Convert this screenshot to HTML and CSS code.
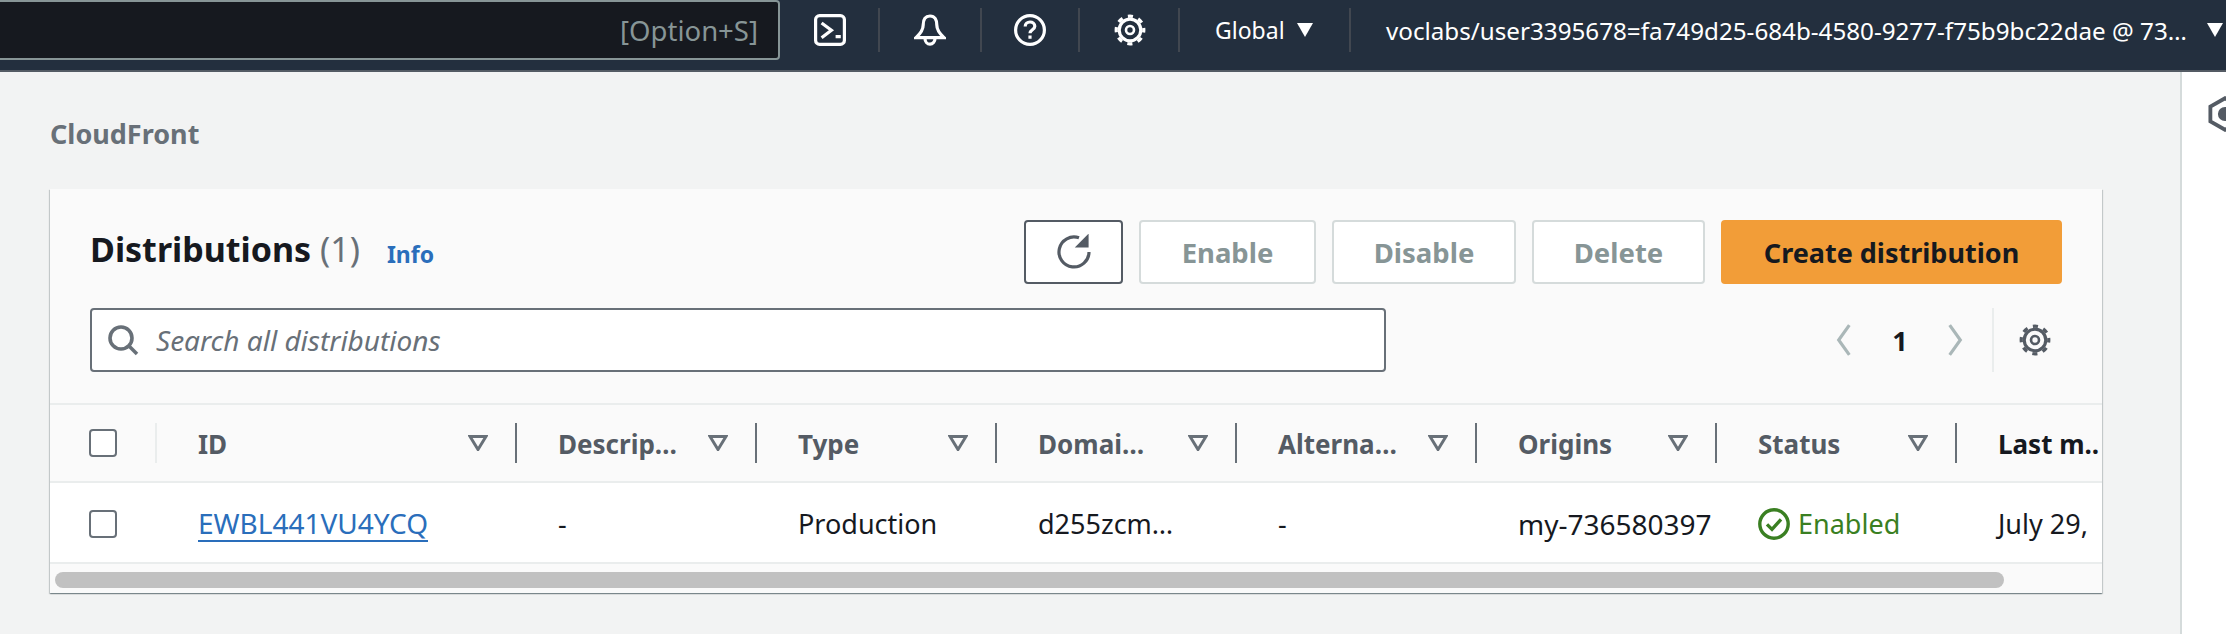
FILE: index.html
```html
<!DOCTYPE html>
<html lang="en">
<head>
  <meta charset="UTF-8">
  <title>CloudFront Distributions</title>
  <link rel="stylesheet" href="styles.css">
</head>
<body>
  <header class="topbar">
    <div class="search-global"><span class="shortcut">[Option+S]</span></div>
    <div class="top-item item-shell">
      <svg class="top-icon" viewBox="0 0 16 16"><rect x="0.8" y="0.8" width="14.4" height="14.4" rx="2"/><path d="M3.800 4.500l4.900 3.600-4.900 3.800M10.800 11.300h2.600"/></svg>
    </div>
    <div class="top-item item-bell">
      <svg class="top-icon" viewBox="0 0 16 16"><path d="M8 1C5.500 1 4.600 3 4.600 5.500 4.600 8 3 10 1 11.800h14C13 10 11.400 8 11.400 5.500 11.400 3 10.500 1 8 1zM5.500 12.200a2.500 2.900 0 0 0 5 0"/></svg>
    </div>
    <div class="top-item item-help">
      <svg class="top-icon" viewBox="0 0 16 16"><circle cx="8" cy="8" r="7.200"/><path d="M5.600 6.200C5.600 4.800 6.700 4 8 4s2.400.8 2.400 2.100c0 1.800-2.400 1.700-2.400 3.500M8 10.700v1.700"/></svg>
    </div>
    <div class="top-item item-gear">
      <svg class="top-icon" viewBox="0 0 16 16"><circle class="gear-teeth" cx="8" cy="8" r="6.900"/><circle cx="8" cy="8" r="5.400"/><circle class="gear-hub" cx="8" cy="8" r="2"/></svg>
    </div>
    <div class="top-item item-region">Global<span class="caret"></span></div>
    <div class="account">voclabs/user3395678=fa749d25-684b-4580-9277-f75b9bc22dae @ 73…<span class="caret"></span></div>
  </header>

  <div class="page">
    <main class="content">
      <div class="breadcrumb">CloudFront</div>

      <section class="panel">
        <div class="panel-head">
          <div class="title-row">
            <h1>Distributions <span class="count">(1)</span></h1>
            <a class="info">Info</a>
            <div class="actions">
              <button class="btn btn-refresh">
                <svg viewBox="0 0 18 18"><path d="M16.500 9a7.500 7.500 0 1 1-5-7.100"/><path class="refresh-arrow" d="M15.800 1v5.200h-5.200z"/></svg>
              </button>
              <button class="btn btn-off btn-enable">Enable</button>
              <button class="btn btn-off btn-disable">Disable</button>
              <button class="btn btn-off btn-delete">Delete</button>
              <button class="btn btn-primary">Create distribution</button>
            </div>
          </div>
          <div class="filter-row">
            <div class="search">
              <svg viewBox="0 0 16 16"><circle cx="7" cy="7" r="5.500"/><path d="M11 11l4 4"/></svg>
              <span>Search all distributions</span>
            </div>
            <div class="pager">
              <svg class="chev" viewBox="0 0 16 32"><path d="M13 2L3 16l10 14"/></svg>
              <span class="page-num">1</span>
              <svg class="chev" viewBox="0 0 16 32"><path d="M3 2l10 14L3 30"/></svg>
            </div>
            <div class="pref">
              <svg viewBox="0 0 16 16"><circle class="gear-teeth" cx="8" cy="8" r="6.900"/><circle cx="8" cy="8" r="5.400"/><circle class="gear-hub" cx="8" cy="8" r="2"/></svg>
            </div>
          </div>
        </div>

        <div class="table">
          <div class="row row-head">
            <div class="cell cell-check first"><span class="box"></span></div>
            <div class="cell"><span class="label">ID</span><svg class="sort" viewBox="0 0 20 16"><path d="M2 1.500h16l-8 13z"/></svg></div>
            <div class="cell"><span class="label">Descrip…</span><svg class="sort" viewBox="0 0 20 16"><path d="M2 1.500h16l-8 13z"/></svg></div>
            <div class="cell"><span class="label">Type</span><svg class="sort" viewBox="0 0 20 16"><path d="M2 1.500h16l-8 13z"/></svg></div>
            <div class="cell"><span class="label">Domai…</span><svg class="sort" viewBox="0 0 20 16"><path d="M2 1.500h16l-8 13z"/></svg></div>
            <div class="cell"><span class="label">Alterna…</span><svg class="sort" viewBox="0 0 20 16"><path d="M2 1.500h16l-8 13z"/></svg></div>
            <div class="cell"><span class="label">Origins</span><svg class="sort" viewBox="0 0 20 16"><path d="M2 1.500h16l-8 13z"/></svg></div>
            <div class="cell"><span class="label">Status</span><svg class="sort" viewBox="0 0 20 16"><path d="M2 1.500h16l-8 13z"/></svg></div>
            <div class="cell last"><span class="label">Last m..</span></div>
          </div>
          <div class="row row-body">
            <div class="cell cell-check"><span class="box"></span></div>
            <div class="cell"><a class="id-link">EWBL441VU4YCQ</a></div>
            <div class="cell">-</div>
            <div class="cell">Production</div>
            <div class="cell">d255zcm…</div>
            <div class="cell">-</div>
            <div class="cell cell-origin">my-736580397</div>
            <div class="cell status">
              <svg viewBox="0 0 16 16"><circle cx="8" cy="8" r="7.100"/><path d="M4.500 8.200l2.500 2.500 4.500-5"/></svg>
              Enabled
            </div>
            <div class="cell">July 29,</div>
          </div>
        </div>
        <div class="scroll-track"><div class="scroll-thumb"></div></div>
      </section>
    </main>

    <aside class="tools">
      <svg viewBox="0 0 16 16"><path d="M8 1l6.500 3.700v6.600L8 15l-6.500-3.700V4.700z"/><circle class="tools-dot" cx="8" cy="8" r="2.300"/></svg>
    </aside>
  </div>
</body>
</html>
```

FILE: styles.css
```css
* {
  box-sizing: border-box;
}
html, body {
  height: 100%;
}
body {
  margin: 0;
  background: #f2f3f3;
  color: #16191f;
  font-family: 'Noto Sans', 'Open Sans', sans-serif;
  font-size: 27px;
  overflow: hidden;
}
svg {
  fill: none;
  stroke: currentColor;
  stroke-width: 1.6;
  display: block;
}

/* top bar */
.topbar {
  height: 72px;
  background: #232f3e;
  border-bottom: 2px solid #545b64;
  display: flex;
  align-items: flex-start;
  color: #fff;
}
.search-global {
  width: 780px;
  height: 60px;
  background: #16191f;
  border: 2px solid #879596;
  border-left: none;
  border-radius: 0 4px 4px 0;
  display: flex;
  align-items: center;
  justify-content: flex-end;
  padding-right: 20px;
  flex-shrink: 0;
}
.shortcut {
  color: #879596;
  font-size: 27.5px;
}
.top-item {
  height: 44px;
  margin-top: 8px;
  border-right: 2px solid #414750;
  display: flex;
  align-items: center;
  justify-content: center;
}
.item-shell { width: 100px; padding-left: 2px; }
.item-bell { width: 102px; }
.item-help { width: 98px; }
.item-gear { width: 100px; padding-left: 2px; }
.item-region {
  width: 171px;
  font-size: 23px;
  justify-content: flex-start;
  padding-left: 35px;
}
.top-icon {
  width: 32px;
  height: 32px;
  stroke-width: 1.6;
}
.gear-teeth {
  stroke-width: 1.6;
  stroke-dasharray: 2.6 2.82;
  stroke-dashoffset: 1.3;
}
.gear-hub {
  stroke-width: 1.3;
}
.caret {
  width: 0;
  height: 0;
  border-left: 8px solid transparent;
  border-right: 8px solid transparent;
  border-top: 14px solid #fff;
  margin-left: 12px;
}
.account {
  margin-left: 35px;
  height: 44px;
  margin-top: 8px;
  display: flex;
  align-items: center;
  white-space: nowrap;
  font-size: 24.2px;
}
.account .caret {
  margin-left: 20px;
}

/* page */
.page {
  display: flex;
  height: 562px;
}
.content {
  width: 2180px;
  padding: 46px 78px 0 50px;
  flex-shrink: 0;
}
.breadcrumb {
  color: #687078;
  font-weight: 700;
  font-size: 27px;
  line-height: 32px;
  height: 71px;
}
.tools {
  width: 46px;
  background: #fff;
  border-left: 2px solid #d5dbdb;
  padding: 24px 0 0 25px;
  color: #545b64;
  overflow: hidden;
}
.tools svg {
  width: 36px;
  height: 36px;
  stroke-width: 1.7;
}
.tools-dot {
  fill: #545b64;
}

/* panel */
.panel {
  background: #fff;
  box-shadow: 0 1px 1px 0 rgba(0,28,36,0.3), 1px 1px 1px 0 rgba(0,28,36,0.15), -1px 1px 1px 0 rgba(0,28,36,0.15);
  overflow: hidden;
}
.panel-head {
  background: #fafafa;
  padding: 31px 40px 33px 40px;
  height: 216px;
  border-bottom: 2px solid #eaeded;
}
.title-row {
  display: flex;
  align-items: center;
  height: 64px;
}
h1 {
  margin: -6px 0 0;
  font-size: 34px;
  font-weight: 700;
  line-height: 60px;
}
.count {
  font-weight: 400;
  color: #687078;
}
.info {
  color: #2a6ebb;
  font-weight: 700;
  font-size: 23px;
  margin-left: 27px;
  margin-top: 4px;
}
.actions {
  margin-left: auto;
  display: flex;
  gap: 16px;
}
.btn {
  height: 64px;
  border-radius: 4px;
  font: inherit;
  font-weight: 700;
  background: #fff;
  border: 2px solid #d5dbdb;
  padding: 0;
  display: flex;
  align-items: center;
  justify-content: center;
}
.btn-off {
  color: #879596;
  font-size: 27.5px;
}
.btn-refresh {
  width: 99px;
  border-color: #545b64;
  color: #545b64;
}
.btn-refresh svg {
  width: 36px;
  height: 36px;
}
.refresh-arrow {
  fill: currentColor;
  stroke-width: 1;
}
.btn-enable { width: 177px; }
.btn-disable { width: 184px; }
.btn-delete { width: 173px; }
.btn-primary {
  width: 341px;
  background: #f29d38;
  border-color: #f29d38;
  color: #16191f;
}
.filter-row {
  margin-top: 24px;
  display: flex;
  align-items: center;
}
.search {
  width: 1296px;
  height: 64px;
  background: #fff;
  border: 2px solid #687078;
  border-radius: 4px;
  display: flex;
  align-items: center;
  padding-left: 15px;
  gap: 17px;
  color: #687078;
  font-style: italic;
  font-size: 28px;
}
.search svg {
  width: 32px;
  height: 32px;
  stroke: #687078;
  stroke-width: 1.8;
}
.pager {
  margin-left: auto;
  display: flex;
  align-items: center;
  color: #aab7b8;
}
.chev {
  width: 22px;
  height: 34px;
  stroke-width: 3;
}
.page-num {
  color: #16191f;
  font-weight: 700;
  width: 89px;
  text-align: center;
}
.pref {
  margin-left: 25.6px;
  height: 64px;
  width: 70px;
  border-left: 2px solid #eaeded;
  display: flex;
  align-items: center;
  justify-content: flex-end;
  padding-right: 11px;
  color: #545b64;
}
.pref svg {
  width: 32px;
  height: 32px;
  stroke-width: 1.6;
}

/* table */
.row {
  display: grid;
  grid-template-columns: 107px 360px repeat(6, 240px) 145px;
  align-items: center;
}
.row-head {
  height: 78px;
  background: #fafafa;
  border-bottom: 2px solid #eaeded;
}
.row-body {
  height: 81px;
  background: #fff;
  border-bottom: 2px solid #eaeded;
}
.cell {
  padding-left: 41px;
  padding-top: 2px;
  white-space: nowrap;
  overflow: hidden;
  display: flex;
  align-items: center;
}
.row-head .cell {
  height: 40px;
  font-size: 26px;
  font-weight: 700;
  color: #545b64;
  padding-right: 27px;
  padding-top: 0;
  border-right: 2px solid #687078;
  justify-content: space-between;
}
.label {
  padding-top: 2px;
}
.row-head .cell.first {
  border-right: 2px solid #eaeded;
  padding: 0 0 0 39px;
}
.row-head .cell.last {
  border-right: none;
  color: #16191f;
  padding-right: 0;
}
.cell-check {
  padding-left: 39px;
}
.box {
  width: 28px;
  height: 28px;
  border: 2px solid #687078;
  border-radius: 4px;
  background: #fff;
}
.sort {
  width: 20px;
  height: 16px;
  flex-shrink: 0;
  color: #687078;
  stroke-width: 3;
}
.id-link {
  color: #2a6ebb;
  border-bottom: 2px solid #2a6ebb;
  line-height: 34px;
  font-size: 28px;
}
.cell-origin {
  font-size: 28px;
}
.status {
  color: #3a7f22;
  gap: 8px;
}
.status svg {
  width: 32px;
  height: 32px;
  stroke-width: 1.700;
}
.scroll-track {
  height: 29px;
  background: #fafafa;
  padding: 8px 0 0 5px;
}
.scroll-thumb {
  width: 1949px;
  height: 16px;
  background: #c1c1c1;
  border-radius: 8px;
}
```
